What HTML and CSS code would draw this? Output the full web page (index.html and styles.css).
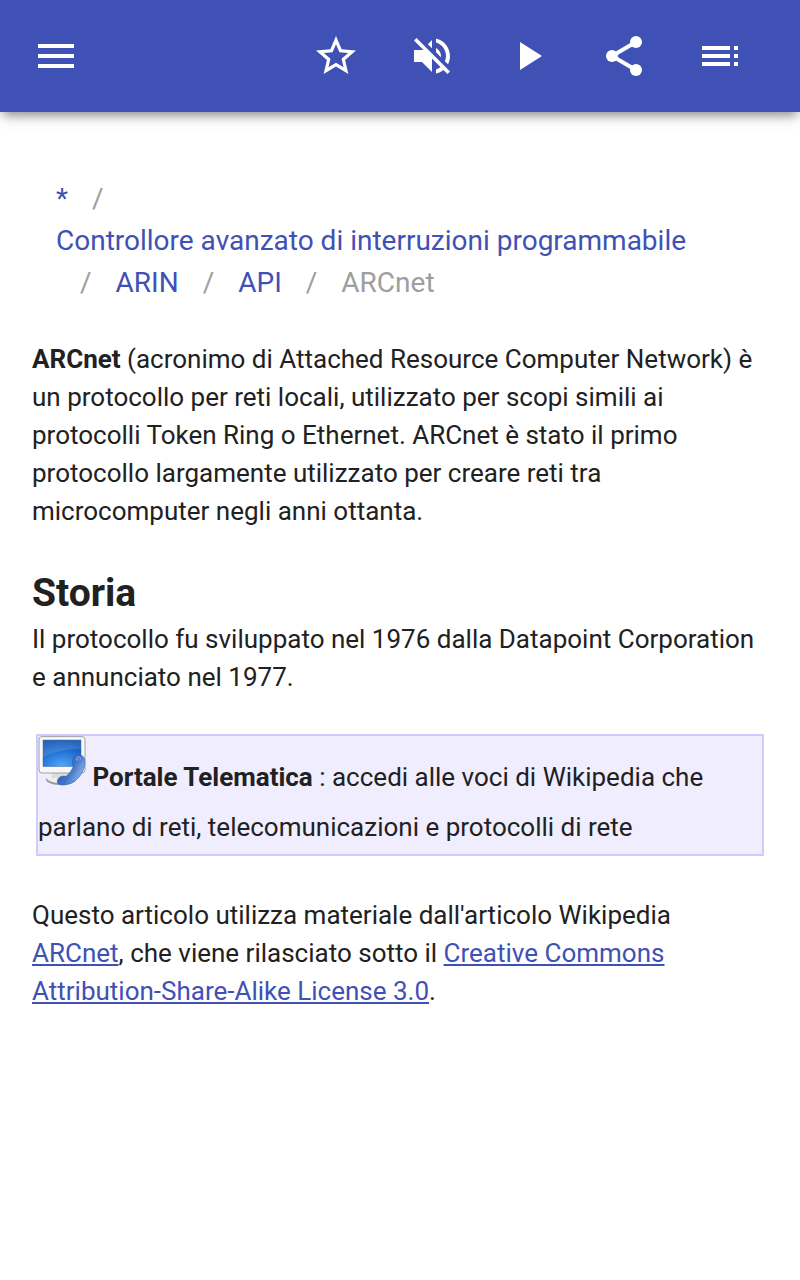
FILE: index.html
```html
<!DOCTYPE html>
<html lang="it">
<head>
	<meta charset="UTF-8">
	<title>ARCnet</title>
	<link rel="stylesheet" href="styles.css">
</head>
<body>
<header class="navbar">
	<a class="icon menu"><svg viewBox="0 0 24 24"><path d="M3 18h18v-2H3v2zm0-5h18v-2H3v2zm0-7v2h18V6H3z"/></svg></a>
	<a class="icon"><svg viewBox="0 0 24 24"><path d="M22 9.24l-7.19-.62L12 2 9.19 8.63 2 9.24l5.46 4.73L5.82 21 12 17.27 18.18 21l-1.63-7.03L22 9.24zM12 15.4l-3.76 2.27 1-4.28-3.32-2.88 4.38-.38L12 6.1l1.71 4.04 4.38.38-3.32 2.88 1 4.28L12 15.4z"/></svg></a>
	<a class="icon"><svg viewBox="0 0 24 24"><path d="M16.5 12c0-1.77-1.02-3.29-2.5-4.03v2.21l2.45 2.45c.03-.2.05-.41.05-.63zm2.5 0c0 .94-.2 1.82-.54 2.64l1.51 1.51C20.63 14.91 21 13.5 21 12c0-4.28-2.99-7.86-7-8.77v2.06c2.89.86 5 3.54 5 6.71zM4.27 3L3 4.27 7.73 9H3v6h4l5 5v-6.73l4.25 4.25c-.67.52-1.42.93-2.25 1.18v2.06c1.38-.31 2.63-.95 3.69-1.81L19.73 21 21 19.73l-9-9L4.27 3zM12 4L9.91 6.09 12 8.18V4z"/></svg></a>
	<a class="icon"><svg viewBox="0 0 24 24"><path d="M8 5v14l11-7z"/></svg></a>
	<a class="icon"><svg viewBox="0 0 24 24"><path d="M6 12L18 5M6 12l12 7" fill="none" stroke="#fff" stroke-width="2"/><circle cx="18" cy="5" r="3"/><circle cx="6" cy="12" r="3"/><circle cx="18" cy="19" r="3"/></svg></a>
	<a class="icon"><svg viewBox="0 0 24 24"><path d="M3 9h14V7H3v2zm0 4h14v-2H3v2zm0 4h14v-2H3v2zm16 0h2v-2h-2v2zm0-10v2h2V7h-2zm0 6h2v-2h-2v2z"/></svg></a>
</header>
<ul class="breadcrumb">
	<li><a>*</a></li>
	<li class="sep">/</li>
	<li><a>Controllore avanzato di interruzioni programmabile</a></li>
	<li class="sep">/</li>
	<li><a>ARIN</a></li>
	<li class="sep">/</li>
	<li><a>API</a></li>
	<li class="sep">/</li>
	<li class="active">ARCnet</li>
</ul>
<div class="content">
	<p><b>ARCnet</b> (acronimo di Attached Resource Computer Network) è un protocollo per reti locali, utilizzato per scopi simili ai protocolli Token Ring o Ethernet. ARCnet è stato il primo protocollo largamente utilizzato per creare reti tra microcomputer negli anni ottanta.</p>
	<h2>Storia</h2>
	<p>Il protocollo fu sviluppato nel 1976 dalla Datapoint Corporation e annunciato nel 1977.</p>
	<div class="portal">
		<svg class="logo" viewBox="0 0 48 50">
			<defs>
				<radialGradient id="screen" cx=".5" cy="1" r="1">
					<stop offset="0" stop-color="#55a8f5"/>
					<stop offset=".6" stop-color="#2070d5"/>
					<stop offset="1" stop-color="#0b4bad"/>
				</radialGradient>
				<linearGradient id="phone" x1="0" y1="0" x2="1" y2=".6">
					<stop offset="0" stop-color="#2455ad"/>
					<stop offset=".6" stop-color="#3f74c8"/>
					<stop offset="1" stop-color="#93b8ee"/>
				</linearGradient>
			</defs>
			<ellipse cx="23" cy="43.5" rx="15" ry="5.5" fill="#9a9a9a"/>
			<ellipse cx="23" cy="41.5" rx="14.5" ry="5.5" fill="#f0f0f0"/>
			<path d="M15 37h17l2 5H13z" fill="#ddd"/>
			<rect x="1" y=".6" width="46" height="36.4" rx="3" fill="#f8f8f8" stroke="#999" stroke-width=".9"/>
			<rect x="5" y="4" width="38" height="26.5" fill="url(#screen)" stroke="#1d4f9c" stroke-width=".4"/>
			<path d="M5 4h38v9Q24 12 5 21z" fill="#fff" opacity=".13"/>
			<path d="M35.5 22c1-4 7-5 10-1 3 5 .5 13-3 18-4 6-11 10-18 10-5 0-6-3-4.500-6 1.500-2.500 5-3.500 8-2.500 4-3 6-7 7.500-10.500-1.500-2-1-5 0-8z" fill="url(#phone)" stroke="#2a5cb0" stroke-width=".6"/>
			<ellipse cx="40.500" cy="23" rx="3.500" ry="3" fill="#6d9ee2" stroke="#2456a8" stroke-width=".6"/>
			<path d="M39 22.500h.8m1.400 0h.8m-2.200 1.600h1.500" stroke="#174a9c" stroke-width=".8"/>
		</svg>
		<b>Portale Telematica</b> : accedi alle voci di Wikipedia che parlano di reti, telecomunicazioni e protocolli di rete
	</div>
	<p>Questo articolo utilizza materiale dall'articolo Wikipedia <a>ARCnet</a>, che viene rilasciato sotto il <a>Creative Commons Attribution-Share-Alike License 3.0</a>.</p>
</div>
</body>
</html>
```
FILE: styles.css
```css
*{box-sizing: border-box;}
body{margin: 0;background: #fff;color: #212121;font: 26px/38px Roboto, sans-serif;}
a{color: #3f51b5;}
.navbar{display: flex;align-items: center;height: 112px;padding: 0 56px 0 32px;background: #3f51b5;box-shadow: 0 6px 10px -3px rgba(0,0,0,.4), 0 2px 20px rgba(0,0,0,.12);}
.icon{width: 48px;height: 48px;margin-right: 48px;}
.icon:last-child{margin-right: 0;}
.icon svg{display: block;width: 48px;height: 48px;fill: #fff;}
.menu{margin-right: auto;}
.breadcrumb{display: flex;flex-wrap: wrap;list-style: none;margin: 66px 32px 36px;padding: 0 24px;font-size: 28px;line-height: 42px;}
.sep{padding: 0 24px;color: #9e9e9e;}
.active{color: #9e9e9e;}
.content{padding: 0 32px;}
.content p{margin: 0;}
.content p a{text-decoration: underline;}
h2{margin: 40px 0 4px;font-size: 39px;line-height: 46px;font-weight: bold;}
.portal{margin: 38px 4px 40px;padding-bottom: 2px;border: 2px solid #ccf;background: #f0edff;line-height: 50px;}
.logo{width: 48px;height: 50px;}
```
